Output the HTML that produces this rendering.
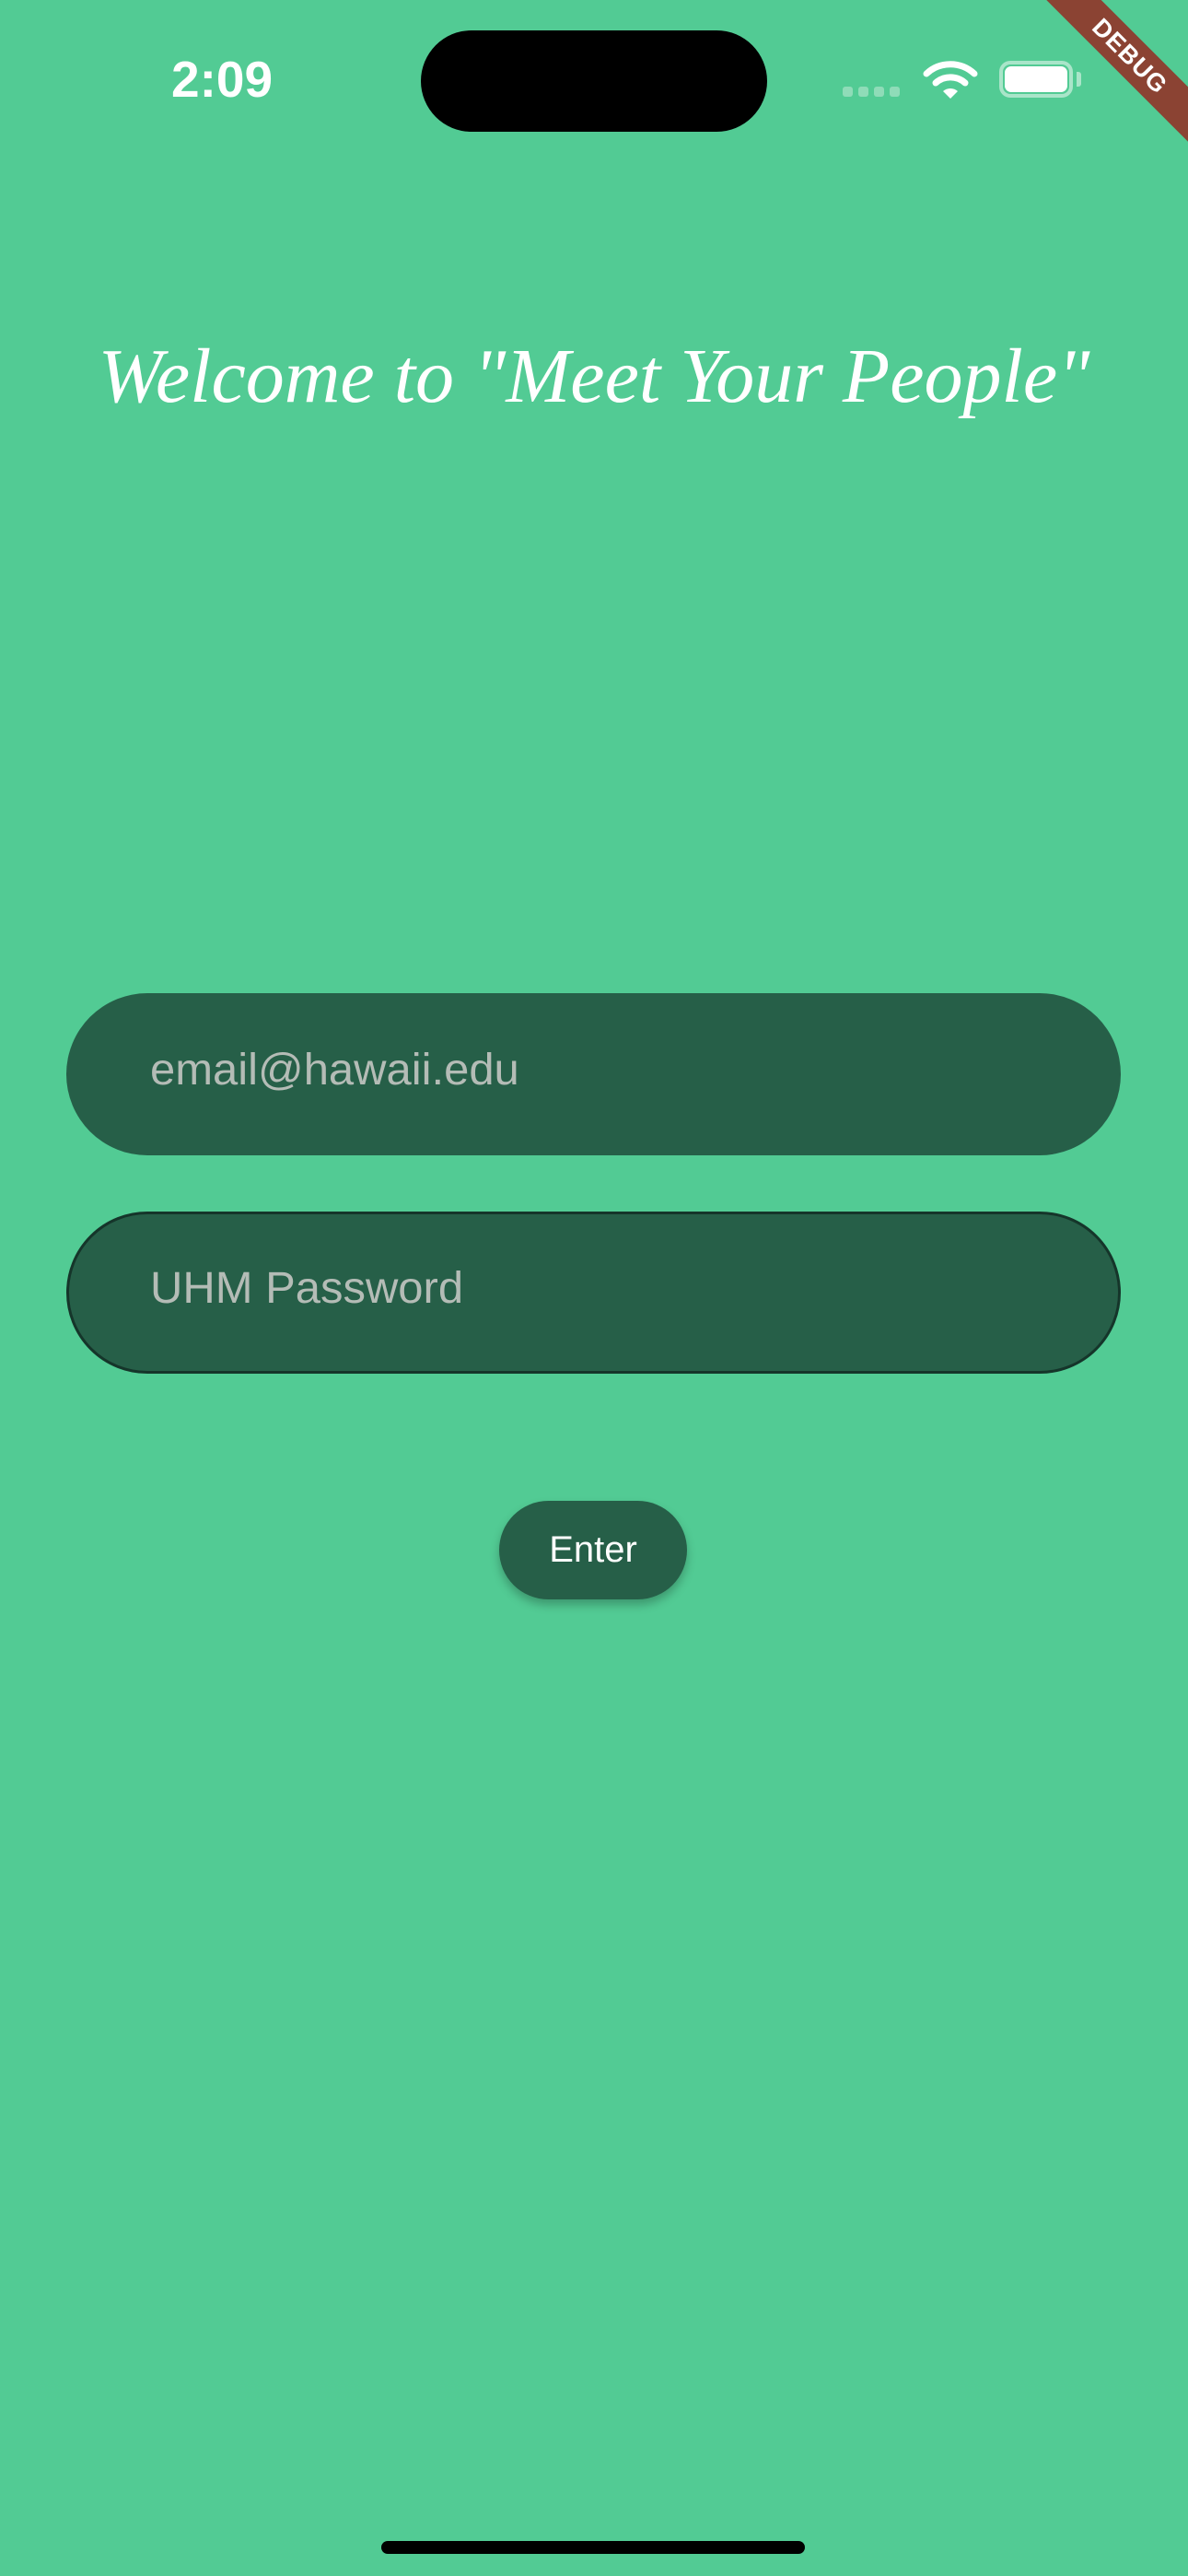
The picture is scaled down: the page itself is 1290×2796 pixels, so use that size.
<!DOCTYPE html>
<html><head><meta charset="utf-8"><style>
html,body{margin:0;padding:0}
body{width:1290px;height:2796px;background:#52CB94;position:relative;overflow:hidden;font-family:"Liberation Sans",sans-serif}
.abs{position:absolute}
.field{position:absolute;left:72px;width:1145px;height:176px;border-radius:88px;background:#265F48;box-sizing:border-box}
.ph{position:absolute;left:91px;top:-4px;line-height:176px;font-size:48px;color:#b4bcb6;transform:scaleX(1.02);transform-origin:left}
</style></head><body>
<div class="abs" style="left:186px;top:54px;font-size:55px;font-weight:bold;color:#fff">2:09</div>
<div class="abs" style="left:457px;top:33px;width:376px;height:110px;border-radius:55px;background:#000"></div>
<div class="abs" style="left:915px;top:94px;display:flex;gap:6px">
<div style="width:11px;height:11px;border-radius:3px;background:#8fdcb8"></div><div style="width:11px;height:11px;border-radius:3px;background:#8fdcb8"></div><div style="width:11px;height:11px;border-radius:3px;background:#8fdcb8"></div><div style="width:11px;height:11px;border-radius:3px;background:#8fdcb8"></div></div>
<svg class="abs" style="left:1002px;top:64px" width="60" height="44" viewBox="0 0 60 44">
<path d="M4 16 A38 38 0 0 1 56 16" stroke="#fff" stroke-width="7" fill="none" stroke-linecap="round"/>
<path d="M14 26 A24 24 0 0 1 46 26" stroke="#fff" stroke-width="7" fill="none" stroke-linecap="round"/>
<path d="M22 35 L30 43 L38 35 A12 12 0 0 0 22 35Z" fill="#fff"/></svg>
<div class="abs" style="left:1085px;top:66px;width:80px;height:40px;border:4px solid #a9e5c9;border-radius:12px;box-sizing:border-box"></div>
<div class="abs" style="left:1091px;top:72px;width:68px;height:28px;background:#fff;border-radius:7px"></div>
<div class="abs" style="left:1169px;top:78px;width:5px;height:16px;background:#a9e5c9;border-radius:0 3px 3px 0"></div>
<div class="abs" style="left:1077px;top:40px;width:300px;height:42px;background:#8B4333;transform:rotate(45deg);color:#fff;font-weight:bold;font-size:27px;text-align:center;line-height:42px;letter-spacing:1px">DEBUG</div>
<div class="abs" style="left:0;width:1290px;top:360px;text-align:center;font-family:'Liberation Serif',serif;font-style:italic;font-size:84px;color:#fff">Welcome to "Meet Your People"</div>
<div class="field" style="top:1078px"><div class="ph">email@hawaii.edu</div></div>
<div class="field" style="top:1315px;border:3px solid #15352a"><div class="ph" style="left:88px;top:-7px">UHM Password</div></div>
<div class="abs" style="left:542px;top:1629px;width:204px;height:107px;border-radius:54px;background:#265F48;box-shadow:0 6px 10px rgba(0,0,0,0.25);color:#fff;font-size:40px;text-align:center;line-height:107px">Enter</div>
<div class="abs" style="left:414px;top:2758px;width:460px;height:14px;border-radius:7px;background:#000"></div>
</body></html>
